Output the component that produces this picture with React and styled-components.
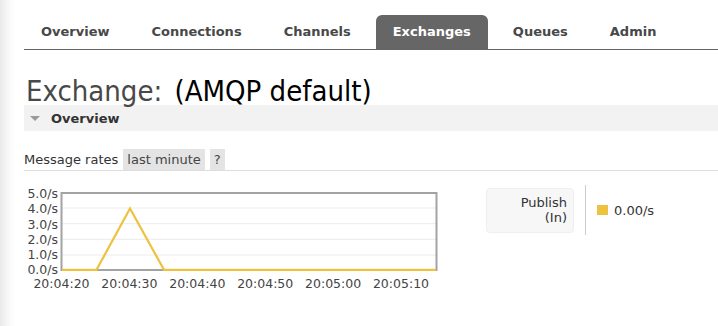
import React from 'react';
import styled, { createGlobalStyle } from 'styled-components';

const GlobalStyle = createGlobalStyle`
    body {
        margin: 0;
        font-family: "DejaVu Sans", Verdana, sans-serif;
        color: #484848;
        background: linear-gradient(to right, #e9e9e9 0, #fbfbfb 10px, #fff 16px);
    }
`;

const Page = styled.div`
    padding: 15px 0 0 24px;
    height: 311px;
`;

const Nav = styled.ul`
    display: flex;
    gap: 8px;
    margin: 0;
    padding: 0;
    list-style: none;
    border-bottom: 1px solid #666;
`;

const Tab = styled.li`
    height: 34px;
    line-height: 34px;
    padding: 0 17px;
    font-size: 13px;
    font-weight: bold;
    color: ${props => props.active ? '#fff' : '#484848'};
    background: ${props => props.active ? '#666' : 'transparent'};
    border-radius: 6px 6px 0 0;
`;

const Title = styled.h1`
    margin: 27px 0 0 2px;
    font-family: "DejaVu Sans Condensed", "DejaVu Sans", Verdana, sans-serif;
    font-stretch: condensed;
    font-size: 29px;
    line-height: 28px;
    font-weight: normal;
    color: #484848;
    span {
        margin-left: 4px;
        color: #000;
    }
`;

const SectionHead = styled.div`
    display: flex;
    align-items: center;
    gap: 11px;
    height: 26px;
    padding-left: 6px;
    background: #f2f2f2;
    font-size: 13px;
    font-weight: bold;
    color: #333;
`;

const Arrow = styled.span`
    width: 0;
    height: 0;
    border-left: 5px solid transparent;
    border-right: 5px solid transparent;
    border-top: 5px solid #9a9a9a;
`;

const RatesRow = styled.div`
    display: flex;
    align-items: center;
    gap: 5px;
    margin-top: 18px;
    height: 21px;
    line-height: 21px;
    font-size: 13px;
    color: #333;
    border-bottom: 1px solid #ddd;
`;

const Pill = styled.span`
    padding: 0 4px;
    background: #e4e4e4;
    color: #444;
`;

const ChartRow = styled.div`
    display: flex;
    align-items: flex-start;
    margin-top: 14px;
`;

const Legend = styled.div`
    display: flex;
    align-items: center;
    margin-left: 42px;
    font-size: 13px;
    color: #333;
`;

const LegendLabel = styled.div`
    width: 74px;
    padding: 6px 6px 7px;
    line-height: 15px;
    text-align: right;
    background: #f7f7f7;
    border-radius: 4px;
    border: 1px solid #efefef;
`;

const Divider = styled.div`
    width: 1px;
    height: 50px;
    margin: 0 11px 0 11px;
    background: #ccc;
`;

const Swatch = styled.span`
    display: inline-block;
    width: 11px;
    height: 10px;
    margin-right: 6px;
    background: ${props => props.color};
`;

const yLabels = ['5.0/s', '4.0/s', '3.0/s', '2.0/s', '1.0/s', '0.0/s'];
const xLabels = ['20:04:20', '20:04:30', '20:04:40', '20:04:50', '20:05:00', '20:05:10'];
const gridY = [23, 38.7, 54.3, 70];

const RateChart = () => (
    <svg width="420" height="112" viewBox="0 0 420 112" fontFamily="DejaVu Sans, Verdana, sans-serif" fontSize="12.5" fill="#444">
        {gridY.map(y => (
            <line key={y} x1="38" x2="412" y1={y} y2={y} stroke="#ebebeb" strokeWidth="1" />
        ))}
        <rect x="37.5" y="8" width="375" height="77" fill="none" stroke="#a3a3a3" strokeWidth="2" />
        <polyline
            points="38,84.8 72.5,84.8 106,23.5 140,84.8 412,84.8"
            fill="none"
            stroke="#edc240"
            strokeWidth="2.2"
            strokeLinejoin="miter"
        />
        {yLabels.map((l, i) => (
            <text key={l} x="34" y={13.3 + i * 15.14} textAnchor="end">{l}</text>
        ))}
        {xLabels.map((l, i) => (
            <text key={l} x={37.5 + i * 67.9} y="102.6" textAnchor="middle">{l}</text>
        ))}
    </svg>
);

export default function App() {
    const tabs = ['Overview', 'Connections', 'Channels', 'Exchanges', 'Queues', 'Admin'];
    return (
        <Page>
            <GlobalStyle />
            <Nav>
                {tabs.map(t => <Tab key={t} active={t === 'Exchanges'}>{t}</Tab>)}
            </Nav>
            <Title>Exchange: <span>(AMQP default)</span></Title>
            <SectionHead><Arrow />Overview</SectionHead>
            <RatesRow>
                Message rates <Pill>last minute</Pill><Pill>?</Pill>
            </RatesRow>
            <ChartRow>
                <RateChart />
                <Legend>
                    <LegendLabel>Publish<br />(In)</LegendLabel>
                    <Divider />
                    <Swatch color="#edc240" />0.00/s
                </Legend>
            </ChartRow>
        </Page>
    );
}
